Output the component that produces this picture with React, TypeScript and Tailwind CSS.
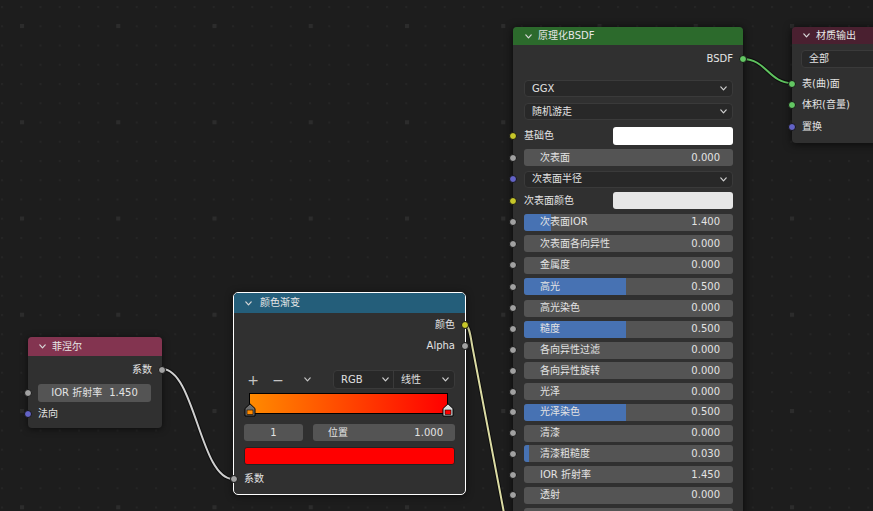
import React from 'react';

const Chev = ({ className = '' }: { className?: string }) => (
  <svg width="7" height="5" viewBox="0 0 7 5" className={className}>
    <path d="M0.8 0.9 L3.5 3.8 L6.2 0.9" fill="none" stroke="currentColor" strokeWidth="1.2" strokeLinecap="round" strokeLinejoin="round" />
  </svg>
);

const Socket = ({ side, color }: { side: 'l' | 'r'; color: string }) => (
  <span
    className={`absolute top-1/2 -translate-y-1/2 w-[8px] h-[8px] rounded-full border border-[#161616] ${side === 'l' ? 'left-[-4px]' : 'right-[-4px]'} ${color}`}
  />
);

const GREY = 'bg-[#a1a1a1]';
const YELLOW = 'bg-[#c7c729]';
const PURPLE = 'bg-[#6363c7]';
const GREEN = 'bg-[#63c763]';

type Row =
  | { kind: 'slider'; label: string; value: string; fill: number }
  | { kind: 'menu'; label: string }
  | { kind: 'color'; label: string; color: string };

const rows: Row[] = [
  { kind: 'slider', label: '次表面', value: '0.000', fill: 0 },
  { kind: 'menu', label: '次表面半径' },
  { kind: 'color', label: '次表面颜色', color: 'bg-[#e6e6e6]' },
  { kind: 'slider', label: '次表面IOR', value: '1.400', fill: 12.8 },
  { kind: 'slider', label: '次表面各向异性', value: '0.000', fill: 0 },
  { kind: 'slider', label: '金属度', value: '0.000', fill: 0 },
  { kind: 'slider', label: '高光', value: '0.500', fill: 49 },
  { kind: 'slider', label: '高光染色', value: '0.000', fill: 0 },
  { kind: 'slider', label: '糙度', value: '0.500', fill: 49 },
  { kind: 'slider', label: '各向异性过滤', value: '0.000', fill: 0 },
  { kind: 'slider', label: '各向异性旋转', value: '0.000', fill: 0 },
  { kind: 'slider', label: '光泽', value: '0.000', fill: 0 },
  { kind: 'slider', label: '光泽染色', value: '0.500', fill: 49 },
  { kind: 'slider', label: '清漆', value: '0.000', fill: 0 },
  { kind: 'slider', label: '清漆粗糙度', value: '0.030', fill: 2.3 },
  { kind: 'slider', label: 'IOR 折射率', value: '1.450', fill: 0 },
  { kind: 'slider', label: '透射', value: '0.000', fill: 0 },
  { kind: 'slider', label: '', value: '', fill: 0 },
];

const Marker = ({ fill, inner }: { fill: string; inner: string }) => (
  <svg width="12" height="14" viewBox="0 0 12 14">
    <path d="M1 13 L1 5.5 L6 0.8 L11 5.5 L11 13 Z" fill={fill} stroke="#000" strokeWidth="1" />
    <rect x="3" y="7" width="6" height="4.5" fill={inner} stroke="#000" strokeWidth="0.6" />
  </svg>
);

function BsdfRow({ r, i }: { r: Row; i: number }) {
  const h = i < 8 ? 'h-[21.5px]' : 'h-[20.75px]';
  if (r.kind === 'slider') {
    return (
      <div className={`relative ${h} flex items-center pl-[11px] pr-[10px]`}>
        <div className="relative h-[17px] w-full rounded-[3px] bg-[#545454] overflow-hidden flex items-center justify-between pl-[16px] pr-[13px]">
          {r.fill > 0 && <div className="absolute left-0 top-0 bottom-0 bg-[#4772b3]" style={{ width: `${r.fill}%` }} />}
          <span className="relative">{r.label}</span>
          <span className="relative">{r.value}</span>
        </div>
        <Socket side="l" color={GREY} />
      </div>
    );
  }
  if (r.kind === 'menu') {
    return (
      <div className={`relative ${h} flex items-center pl-[11px] pr-[10px]`}>
        <div className="h-[17px] w-full rounded-[4px] bg-[#282828] border border-[#3a3a3a] flex items-center justify-between pl-[7px] pr-[5px]">
          <span>{r.label}</span>
          <Chev className="text-[#cfcfcf]" />
        </div>
        <Socket side="l" color={PURPLE} />
      </div>
    );
  }
  return (
    <div className={`relative ${h} flex items-center pl-[11px] pr-[10px]`}>
      <span className="flex-1">{r.label}</span>
      <div className={`h-[17px] w-[120px] rounded-[3px] ${r.color}`} />
      <Socket side="l" color={YELLOW} />
    </div>
  );
}

export default function App() {
  return (
    <div className="relative w-[873px] h-[511px] overflow-hidden bg-[#1d1d1d] text-[10px] leading-none text-[#e3e3e3] font-['DejaVu_Sans','Noto_Sans_CJK_SC',sans-serif]">
      {/* grid */}
      <svg className="absolute inset-0" width="873" height="511">
        <defs>
          <pattern id="small" x="1" y="6" width="19.25" height="19.25" patternUnits="userSpaceOnUse">
            <rect x="0" y="0" width="2" height="2" fill="#252525" />
          </pattern>
          <pattern id="big" x="20" y="24" width="96.25" height="96.25" patternUnits="userSpaceOnUse">
            <rect x="0" y="0" width="4" height="4" fill="#2c2c2c" />
          </pattern>
        </defs>
        <rect width="873" height="511" fill="url(#small)" />
        <rect width="873" height="511" fill="url(#big)" />
      </svg>

      {/* links */}
      <svg className="absolute inset-0" width="873" height="511">
        <path d="M162 369 C195 369, 200 479, 233 479" fill="none" stroke="#000" strokeOpacity="0.55" strokeWidth="4" />
        <path d="M162 369 C195 369, 200 479, 233 479" fill="none" stroke="#cfcfcf" strokeWidth="2" />
        <path d="M465 325 C470 325, 471 341, 473 350 L508 534" fill="none" stroke="#000" strokeOpacity="0.55" strokeWidth="4" />
        <path d="M465 325 C470 325, 471 341, 473 350 L508 534" fill="none" stroke="#dcdca4" strokeWidth="2" />
        <path d="M743 59 C766 59, 769 83, 792 83" fill="none" stroke="#000" strokeOpacity="0.55" strokeWidth="4" />
        <path d="M743 59 C766 59, 769 83, 792 83" fill="none" stroke="#5fc25f" strokeWidth="2" />
      </svg>

      {/* Fresnel node */}
      <div className="absolute left-[28px] top-[337px] w-[134px] h-[91px] rounded-[4px] bg-[#303030] shadow-[0_1px_7px_rgba(0,0,0,0.6)] flex flex-col">
        <div className="h-[19px] rounded-t-[4px] bg-[#833450] flex items-center pl-[11px] gap-[6px] text-[#e6e6e6]">
          <Chev className="text-[#d8d8d8]" />
          <span>菲涅尔</span>
        </div>
        <div className="h-[4px]" />
        <div className="relative h-[20px] flex items-center justify-end pr-[10px]">
          <span>系数</span>
          <Socket side="r" color={GREY} />
        </div>
        <div className="h-[4px]" />
        <div className="relative h-[18px] pl-[10px] pr-[11px]">
          <div className="h-full rounded-[3px] bg-[#545454] flex items-center justify-center gap-[7px]">
            <span>IOR 折射率</span>
            <span>1.450</span>
          </div>
          <Socket side="l" color={GREY} />
        </div>
        <div className="h-[3px]" />
        <div className="relative h-[18px] flex items-center pl-[10px]">
          <span>法向</span>
          <Socket side="l" color={PURPLE} />
        </div>
      </div>

      {/* Color ramp node */}
      <div className="absolute left-[233px] top-[292px] w-[233px] h-[203px] rounded-[5px] border border-white bg-[#303030] shadow-[0_1px_7px_rgba(0,0,0,0.6)] flex flex-col">
        <div className="h-[20px] rounded-t-[4px] bg-[#245e7a] flex items-center pl-[11px] gap-[8px] text-[#e6e6e6]">
          <Chev className="text-[#d8d8d8]" />
          <span>颜色渐变</span>
        </div>
        <div className="h-[2px]" />
        <div className="relative h-[20px] flex items-center justify-end pr-[10px]">
          <span>颜色</span>
          <Socket side="r" color={YELLOW} />
        </div>
        <div className="relative h-[21px] flex items-center justify-end pr-[10px]">
          <span>Alpha</span>
          <Socket side="r" color={GREY} />
        </div>
        <div className="h-[14px]" />
        <div className="h-[19px] flex items-center pl-[14px] pr-[10px] text-[#c4c4c4]">
          <div className="w-[10px] flex justify-center text-[14px]">+</div>
          <div className="w-[10px] ml-[15px] flex justify-center text-[14px]">−</div>
          <div className="w-[10px] ml-[19px] flex justify-center"><Chev /></div>
          <div className="ml-[21px] flex-1 h-full flex rounded-[4px] bg-[#282828] border border-[#3a3a3a] text-[#e0e0e0]">
            <div className="w-[60px] flex items-center justify-between pl-[7px] pr-[4px] border-r border-[#3a3a3a]">
              <span>RGB</span>
              <Chev className="text-[#cfcfcf]" />
            </div>
            <div className="flex-1 flex items-center justify-between pl-[7px] pr-[5px]">
              <span>线性</span>
              <Chev className="text-[#cfcfcf]" />
            </div>
          </div>
        </div>
        <div className="h-[4px]" />
        <div className="relative h-[21px] ml-[15px] mr-[17px]">
          <div className="h-full border border-black bg-[linear-gradient(to_right,#ff8a00,#ff0000)]" />
          <div className="absolute left-[-5px] top-[10px]">
            <Marker fill="#6e6e6e" inner="#ff8a00" />
          </div>
          <div className="absolute right-[-6px] top-[10px]">
            <Marker fill="#dcdcdc" inner="#ff0000" />
          </div>
        </div>
        <div className="h-[10px]" />
        <div className="h-[17px] flex gap-[10px] pl-[10px] pr-[10px]">
          <div className="w-[59px] rounded-[3px] bg-[#545454] flex items-center justify-center">1</div>
          <div className="flex-1 rounded-[3px] bg-[#545454] flex items-center justify-between pl-[15px] pr-[12px]">
            <span>位置</span>
            <span>1.000</span>
          </div>
        </div>
        <div className="h-[6px]" />
        <div className="h-[18px] mx-[10px] rounded-[3px] bg-[#ff0000] border border-[#222]" />
        <div className="h-[5px]" />
        <div className="relative h-[18px] flex items-center pl-[10px]">
          <span>系数</span>
          <Socket side="l" color={GREY} />
        </div>
      </div>

      {/* Principled BSDF node */}
      <div className="absolute left-[513px] top-[27px] w-[230px] h-[560px] rounded-[4px] bg-[#303030] shadow-[0_1px_8px_rgba(0,0,0,0.7)] flex flex-col">
        <div className="h-[18px] rounded-t-[4px] bg-[#2c6a2c] flex items-center pl-[12px] gap-[6px] text-[#e6e6e6]">
          <Chev className="text-[#d8d8d8]" />
          <span>原理化BSDF</span>
        </div>
        <div className="h-[4px]" />
        <div className="relative h-[20px] flex items-center justify-end pr-[10px]">
          <span>BSDF</span>
          <Socket side="r" color={GREEN} />
        </div>
        <div className="h-[11px]" />
        <div className="h-[17px] pl-[11px] pr-[10px]">
          <div className="h-full rounded-[4px] bg-[#282828] border border-[#3a3a3a] flex items-center justify-between pl-[7px] pr-[5px]">
            <span>GGX</span>
            <Chev className="text-[#cfcfcf]" />
          </div>
        </div>
        <div className="h-[6px]" />
        <div className="h-[17px] pl-[11px] pr-[10px]">
          <div className="h-full rounded-[4px] bg-[#282828] border border-[#3a3a3a] flex items-center justify-between pl-[7px] pr-[5px]">
            <span>随机游走</span>
            <Chev className="text-[#cfcfcf]" />
          </div>
        </div>
        <div className="h-[7px]" />
        <div className="relative h-[18px] flex items-center pl-[11px] pr-[10px]">
          <span className="flex-1">基础色</span>
          <div className="h-[18px] w-[120px] rounded-[3px] bg-white" />
          <Socket side="l" color={YELLOW} />
        </div>
        <div className="h-[2px]" />
        {rows.map((r, i) => (
          <BsdfRow key={i} r={r} i={i} />
        ))}
      </div>

      {/* Material output node */}
      <div className="absolute left-[792px] top-[27px] w-[130px] h-[116px] rounded-[4px] bg-[#303030] shadow-[0_1px_8px_rgba(0,0,0,0.7)] flex flex-col">
        <div className="h-[17px] rounded-t-[4px] bg-[#4a2030] flex items-center pl-[11px] gap-[6px] text-[#e6e6e6]">
          <Chev className="text-[#d8d8d8]" />
          <span>材质输出</span>
        </div>
        <div className="h-[6px]" />
        <div className="h-[18px] pl-[9px]">
          <div className="h-full rounded-[4px] bg-[#282828] border border-[#3a3a3a] flex items-center pl-[7px]">
            <span>全部</span>
          </div>
        </div>
        <div className="h-[5px]" />
        <div className="relative h-[21.5px] flex items-center pl-[10px]">
          <span>表(曲)面</span>
          <Socket side="l" color={GREEN} />
        </div>
        <div className="relative h-[21.5px] flex items-center pl-[10px]">
          <span>体积(音量)</span>
          <Socket side="l" color={GREEN} />
        </div>
        <div className="relative h-[21.5px] flex items-center pl-[10px]">
          <span>置换</span>
          <Socket side="l" color={PURPLE} />
        </div>
      </div>
    </div>
  );
}
